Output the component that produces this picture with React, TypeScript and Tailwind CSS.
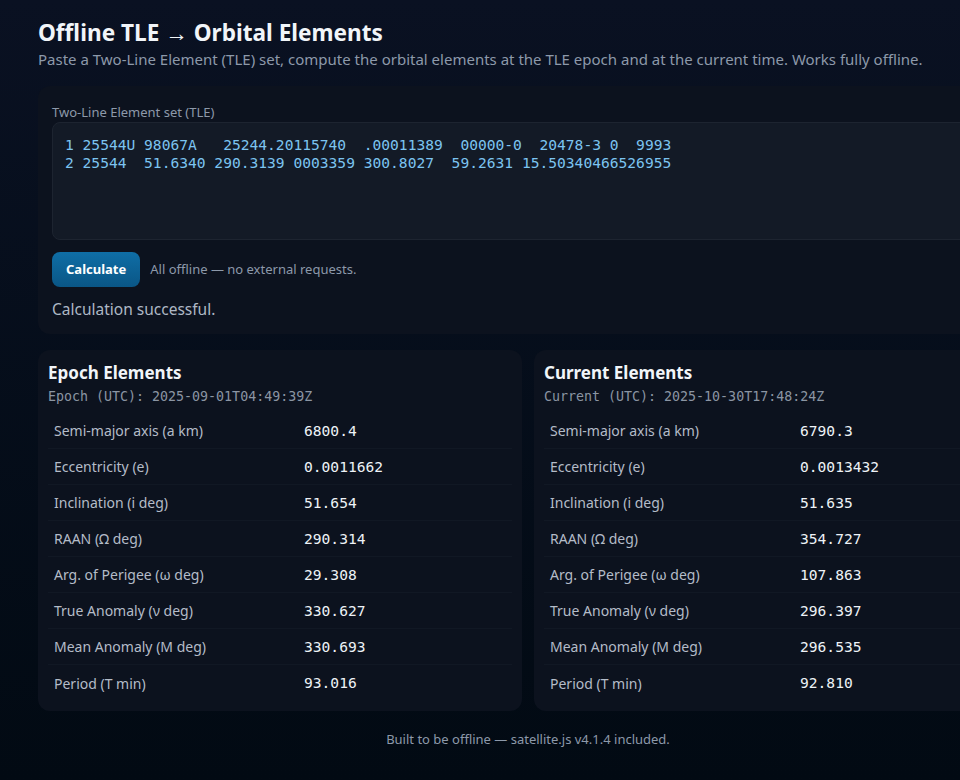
import React from 'react'

type Row = { label: string; value: string }

const epochRows: Row[] = [
  { label: 'Semi-major axis (a km)', value: '6800.4' },
  { label: 'Eccentricity (e)', value: '0.0011662' },
  { label: 'Inclination (i deg)', value: '51.654' },
  { label: 'RAAN (Ω deg)', value: '290.314' },
  { label: 'Arg. of Perigee (ω deg)', value: '29.308' },
  { label: 'True Anomaly (ν deg)', value: '330.627' },
  { label: 'Mean Anomaly (M deg)', value: '330.693' },
  { label: 'Period (T min)', value: '93.016' },
]

const currentRows: Row[] = [
  { label: 'Semi-major axis (a km)', value: '6790.3' },
  { label: 'Eccentricity (e)', value: '0.0013432' },
  { label: 'Inclination (i deg)', value: '51.635' },
  { label: 'RAAN (Ω deg)', value: '354.727' },
  { label: 'Arg. of Perigee (ω deg)', value: '107.863' },
  { label: 'True Anomaly (ν deg)', value: '296.397' },
  { label: 'Mean Anomaly (M deg)', value: '296.535' },
  { label: 'Period (T min)', value: '92.810' },
]

const TLE = `1 25544U 98067A   25244.20115740  .00011389  00000-0  20478-3 0  9993
2 25544  51.6340 290.3139 0003359 300.8027  59.2631 15.50340466526955`

const sans = "font-['Noto_Sans','Open_Sans',sans-serif]"
const mono = "font-['DejaVu_Sans_Mono','Liberation_Mono',monospace]"

function ElementsCard({ title, stamp, rows }: { title: string; stamp: string; rows: Row[] }) {
  return (
    <div className="rounded-xl bg-[#0c121e] px-[10px] pt-[12px] pb-[10px]">
      <div className="text-[17px] font-bold leading-[22px] text-[#f1f5f9]">{title}</div>
      <div className={`${mono} mt-[4px] text-[13.3px] leading-[18px] text-[#8b95a3]`}>{stamp}</div>
      <div className="mt-[7px]">
        {rows.map((r, i) => (
          <div
            key={r.label}
            className={`grid grid-cols-[250px_1fr] items-center h-[36px] px-[6px] ${
              i < rows.length - 1 ? 'border-b border-[#111824]' : ''
            }`}
          >
            <span className="text-[14px] text-[#b4bcc8]">{r.label}</span>
            <span className={`${mono} text-[14.6px] text-[#eef2f7]`}>{r.value}</span>
          </div>
        ))}
      </div>
    </div>
  )
}

export default function App() {
  return (
    <div className={`${sans} min-h-[780px] w-full bg-gradient-to-b from-[#0a1122] to-[#020a13] overflow-hidden`}>
      <div className="w-[980px] ml-[38px] pt-[18px] pb-[30px]">
        <h1 className="text-[22.6px] font-bold leading-[30px] text-[#f1f5f9]">Offline TLE → Orbital Elements</h1>
        <p className="text-[15px] leading-[22px] text-[#8d99aa]">
          Paste a Two-Line Element (TLE) set, compute the orbital elements at the TLE epoch and at the current time. Works fully offline.
        </p>

        <div className="mt-[16px] rounded-xl bg-[#0c121e] px-[14px] pt-[17px] pb-[14px]">
          <label className="block text-[13px] leading-[18px] text-[#8d99aa]">Two-Line Element set (TLE)</label>
          <textarea
            readOnly
            value={TLE}
            spellCheck={false}
            className={`${mono} mt-[1px] block w-full h-[118px] resize-none rounded-lg border border-[#1d2430] bg-[#131a26] px-[12px] pt-[13px] text-[14.6px] leading-[18px] text-[#7cc4f0] outline-none whitespace-pre overflow-hidden`}
          />
          <div className="mt-[12px] flex items-center gap-[10px]">
            <button className="h-[35px] px-[14px] rounded-lg bg-gradient-to-b from-[#0f6ea6] to-[#0a5686] text-[13px] font-bold text-white">
              Calculate
            </button>
            <span className="text-[13px] text-[#8d99aa]">All offline — no external requests.</span>
          </div>
          <div className="mt-[11px] text-[15.5px] leading-[22px] text-[#aeb8c5]">Calculation successful.</div>
        </div>

        <div className="mt-[16px] grid grid-cols-2 gap-[12px]">
          <ElementsCard title="Epoch Elements" stamp="Epoch (UTC): 2025-09-01T04:49:39Z" rows={epochRows} />
          <ElementsCard title="Current Elements" stamp="Current (UTC): 2025-10-30T17:48:24Z" rows={currentRows} />
        </div>

        <div className="mt-[19px] text-center text-[13px] text-[#8d99aa]">
          Built to be offline — satellite.js v4.1.4 included.
        </div>
      </div>
    </div>
  )
}
